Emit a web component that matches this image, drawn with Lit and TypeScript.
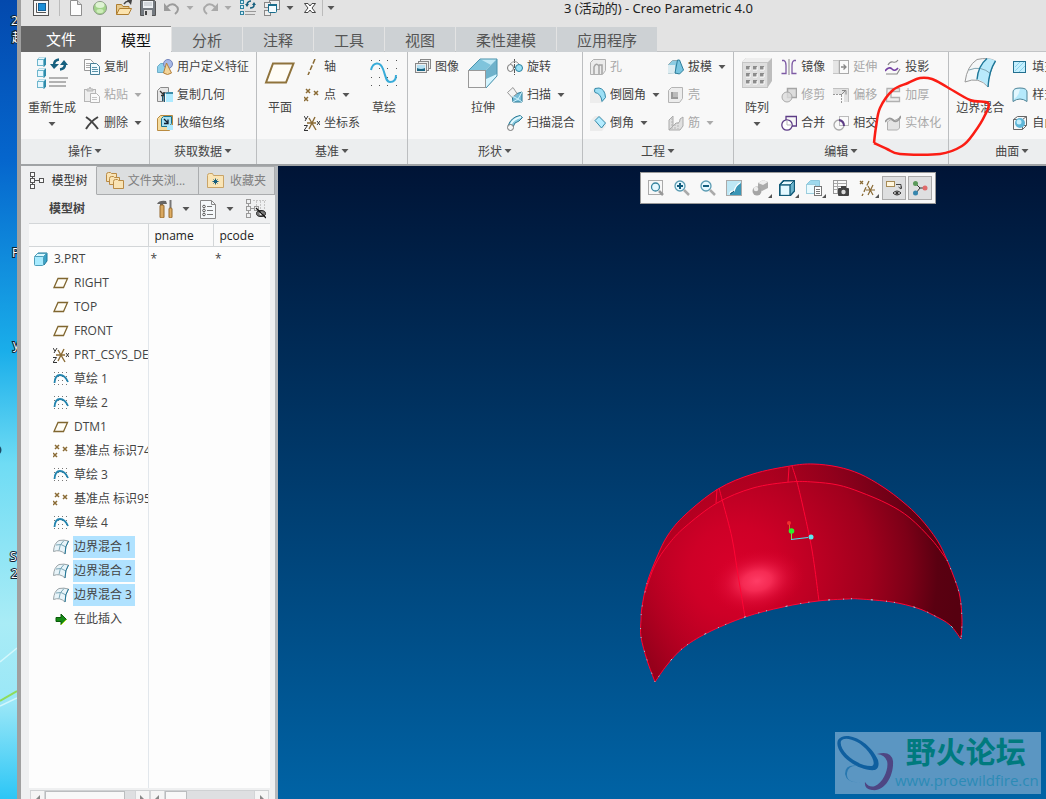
import { LitElement, html, svg, css } from "lit";
import { customElement } from "lit/decorators.js";

type Pt = [number, number];

/* Catmull-Rom spline through the points, written as cubic segments */
function spline(p: Pt[]): string {
  let d = `M${p[0][0]} ${p[0][1]}`;
  for (let i = 0; i < p.length - 1; i++) {
    const a = p[Math.max(i - 1, 0)], b = p[i], c = p[i + 1], e = p[Math.min(i + 2, p.length - 1)];
    const n = (v: number) => v.toFixed(1);
    d += `C${n(b[0] + (c[0] - a[0]) / 6)} ${n(b[1] + (c[1] - a[1]) / 6)} ${n(c[0] - (e[0] - b[0]) / 6)} ${n(c[1] - (e[1] - b[1]) / 6)} ${c[0]} ${c[1]}`;
  }
  return d;
}

const cubeSmall = (x: number, y: number) => svg`
  <path d="M${x} ${y + 3}l2-2.500h7v7l-2 2.500z" fill="#2f8cab"/><path d="M${x + 0.5} ${y + 2.5}l2-2h6l-2 2z" fill="#e4f7fd"/>
  <rect x=${x + 0.5} y=${y + 2.5} width="6" height="6" fill="#e6f8ff" stroke="#6fb6cd"/>`;
const cross = (x: number, y: number, c = "#8a6b35") => svg`<path d="M${x} ${y}l4 4m0-4l-4 4" stroke=${c} stroke-width="1.5" fill="none"/>`;
const dots = (xs: number[], ys: number[], c = "#555") => xs.map(x => ys.map(y => svg`<rect x=${x} y=${y} width="1" height="1" fill=${c}/>`));

const icons: Record<string, unknown> = {
  app: svg`<rect x=".5" y=".5" width="15" height="15" fill="#f7f7f7" stroke="#555"/><path d="M3.500 3v9.500h9.500" fill="none" stroke="#555"/><rect x="5.500" y="3.500" width="7" height="7" fill="#1b8fd8" stroke="#155f95"/>`,
  doc: svg`<path d="M2.500.5h7l4 4v11h-11z" fill="#fdfdfd" stroke="#8f8f8f"/><path d="M9.500.5v4h4" fill="#ddd" stroke="#8f8f8f"/>`,
  ball: svg`<circle cx="8" cy="8" r="6.500" fill="#a3d48b" stroke="#8b9a85"/><ellipse cx="8" cy="5" rx="4.500" ry="3" fill="#def3d3"/><ellipse cx="8" cy="11" rx="3.500" ry="2" fill="#cdedb9"/>`,
  open: svg`<path d="M.5 14.500v-10h5l1.500 2h6v2" fill="#e7c98c" stroke="#ae7d2f"/><path d="M.5 14.500l3-6h12l-3 6z" fill="#fbe3ae" stroke="#ae7d2f"/><path d="M8 4q3-4 6-2" fill="none" stroke="#444" stroke-width="1.500"/><path d="M11 0l5 0-1 5z" fill="#444"/>`,
  save: svg`<path d="M.5.5h14l1 1v14h-15z" fill="#747a80" stroke="#555"/><rect x="3" y="1" width="10" height="7" fill="#eef1f4"/><path d="M4 3h8M4 5h8" stroke="#b6bcc2"/><rect x="4" y="10" width="8" height="6" fill="#ddd"/><rect x="5" y="11" width="2" height="4" fill="#444"/>`,
  undo: svg`<path d="M3 7q4-4 8-2 6 4 0 9" fill="none" stroke="#9b9b9b" stroke-width="2"/><path d="M0 3v8h7z" fill="#9b9b9b"/>`,
  redo: svg`<path d="M13 7q-4-4-8-2-6 4 0 9" fill="none" stroke="#a9a9a9" stroke-width="2"/><path d="M16 3v8h-7z" fill="#a9a9a9"/>`,
  regenSmall: svg`<g fill="#cceefa" stroke="#31829f"><rect x=".5" y=".5" width="3" height="3"/><rect x=".5" y="5.500" width="3" height="3"/><rect x=".5" y="11.500" width="3" height="3"/></g><path d="M7 4q1-3 4-3M14 5q0 3-4 3" fill="none" stroke="#17607f" stroke-width="1.600"/><path d="M5 4h4l-2 3zM12 5h4l-2-3z" fill="#17607f"/><path d="M5 11.500h11M5 14.500h10" stroke="#999"/>`,
  windows: svg`<g fill="#eee" stroke="#888"><rect x="5.500" y=".5" width="10" height="9"/><rect x=".5" y="2.500" width="6" height="5"/><rect x=".5" y="10.500" width="6" height="5"/></g><rect x="4.500" y="4.500" width="8" height="8" rx="1" fill="#f3fbfe" stroke="#186c8c"/><path d="M4 5h9" stroke="#186c8c" stroke-width="2"/>`,
  close: svg`<path d="M2.500 3.500h3.500l2 2.500 2-2.500h3.500l-3.500 4.500 3.500 4.500h-3.500l-2-2.500-2 2.500H2.500L6 8z" fill="#fff" stroke="#444"/>`,
  regen: svg`${cubeSmall(1, 0)}${cubeSmall(1, 11)}${cubeSmall(1, 22)}<path d="M18 8q0-5 5-5.500M29 7q0 5-5 5.500" fill="none" stroke="#17607f" stroke-width="2.500"/><path d="M14 7h9l-5 5zM24 8h8l-4-5z" fill="#17607f"/><path d="M13 21h19M13 25h17M13 29h17" stroke="#9b9b9b" stroke-width="1.600"/>`,
  copy: svg`<path d="M.5.5h6l3 3v8h-9z" fill="#fdfdfd" stroke="#999"/><path d="M2 4.500h4M2 6.500h4M2 8.500h4" stroke="#aaa"/><path d="M6.500 4.500h6l3 3v8h-9z" fill="#f0fbff" stroke="#477f97"/><path d="M8 8.500h5M8 10.500h6M8 12.500h6" stroke="#5b93aa"/>`,
  paste: svg`<rect x=".5" y="2.500" width="11" height="12" fill="#eee" stroke="#b5b5b5"/><path d="M3 4V2h2l1-2 1 2h2v2z" fill="#d8d8d8" stroke="#b5b5b5"/><path d="M6.500 6.500h6l3 3v6h-9z" fill="#fafafa" stroke="#b5b5b5"/><path d="M8 10.500h5M8 12.500h5" stroke="#c5c5c5"/>`,
  del: svg`<path d="M2 2Q8 6 14 14M14 2Q7 6 2 14" fill="none" stroke="#444" stroke-width="2"/>`,
  udf: svg`<path d="M.5 7.500l3-3h7v7l-2 2h-8z" fill="#8fd0ea" stroke="#6eaec9"/><circle cx="11" cy="5" r="4.500" fill="#a7b8e6" stroke="#7384bb"/><path d="M9.500 4l5 10q-4 3-8 0z" fill="#f2d49a" stroke="#b4803c"/>`,
  copyGeom: svg`<path d="M.5 3.500l3-3h8v5h-5v9h-6z" fill="#e6e6e6" stroke="#8a8a8a"/><path d="M3 4l4 4M7 5v3.500H4" fill="none" stroke="#333" stroke-width="1.300"/><path d="M5.500 9v5M7.500 6v9" stroke="#175672"/><path d="M8 7l2-2h6v2" fill="#3c8daa"/><rect x="9" y="7" width="7" height="8" fill="#aeeaff"/>`,
  shrink: svg`<path d="M.5 3.500l3-3h12v10l-3 5H.5z" fill="#f5dc9f" stroke="#b98b40"/><path d="M4.500 3.500l2-2h8v7l-2 3h-8z" fill="#a6e1f3" stroke="#187391"/><path d="M7 4l4 4M11 4.500V8.500H7" fill="none" stroke="#123" stroke-width="1.300"/><rect x="10" y="10" width="6" height="5" fill="#aeeaff"/>`,
  plane: svg`<path d="M2 25.500L9 6.500h20.500l-7.500 19z" fill="#fffdf6" stroke="#8f733c" stroke-width="2"/>`,
  axis: svg`<path d="M11 0L4 16" stroke="#8a6b35" stroke-width="1.500" stroke-dasharray="5 2"/>`,
  point: svg`${cross(2, 2)}${cross(10, 4)}${cross(0, 10)}`,
  csys: svg`<path d="M3 8h9M5 14l6-12M5 3l7 12" fill="none" stroke="#8a6b35" stroke-width="1.400"/><path d="M0 1l2 3M4 1L1 6M0 10.500h3.500L0 15.500h4M13 6l3 4M16 6l-3 4" fill="none" stroke="#333"/>`,
  sketch: svg`${dots([3, 11, 19, 28], [3, 11, 20, 28])}<path d="M3 13C5 5 12 4 15 12S18 25 22 25 28 22 28 18" fill="none" stroke="#38abd8" stroke-width="2"/>`,
  image: svg`<g fill="#eee" stroke="#888"><rect x="5.500" y=".5" width="10" height="9"/><rect x="3.500" y="2.500" width="10" height="9"/><rect x=".5" y="4.500" width="11" height="9"/></g><rect x="2" y="6" width="8" height="6" fill="#b8e2f4"/><path d="M2 12v-3q4 2 8 0v3z" fill="#1d6784"/>`,
  extrude: svg`<path d="M2 13L13 2h17L19 13z" fill="#7fc4dc"/><path d="M13 2h17l-6 6z" fill="#bfe8f5"/><path d="M19 13L30 2v17L19 31z" fill="#6fb2cb"/><path d="M19 22l11-5v2L19 31z" fill="#d5f5ff"/><path d="M2 13L13 2h17v17L19 31" fill="none" stroke="#4b93ad"/><rect x="1.500" y="13.500" width="17" height="17" fill="#f8f8f8" stroke="#999"/>`,
  revolve: svg`<ellipse cx="3.500" cy="9" rx="3" ry="3.500" fill="#fafafa" stroke="#777"/><ellipse cx="12" cy="9" rx="3.500" ry="3.500" fill="#9be1f6" stroke="#297f9e"/><path d="M7.500 0v16" stroke="#555" stroke-dasharray="4 1"/><path d="M3 5q5-5 9 0" fill="none" stroke="#999"/>`,
  sweep: svg`<path d="M5 8l10-3v10H6z" fill="#78bdd8" stroke="#297894"/><path d="M.5 5.500L6 .5l4 6-5 4z" fill="#f4f4f4" stroke="#999"/><path d="M5 9l6 3 4-7M11 12l-5 3M11 12l4 3" fill="none" stroke="#cdf1fc"/>`,
  blend: svg`<path d="M1 11Q4 2 13 .5l2.500 2L12 6q-5 1-6 6z" fill="#86c8de" stroke="#297894"/><path d="M4 9q2-5 10-7" fill="none" stroke="#e5faff" stroke-width="2"/><circle cx="3.500" cy="12.500" r="3" fill="#f7f7f7" stroke="#777"/>`,
  hole: svg`<path d="M.5 3.500l3-3h12v11l-3 4h-12z" fill="#ebebeb" stroke="#b0b0b0"/><path d="M4 15V8q2-5 5-1v8M9 6h3v9" fill="none" stroke="#a4a4a4" stroke-width="1.500"/>`,
  round: svg`<path d="M0 6L4 1h6q6 3 6 9l-4 6H0z" fill="#ededed"/><path d="M5 1.500q-1 3 0 4 6 1 7 9l3.500-4Q15 2 9 1z" fill="#9cdff5" stroke="#3589a8"/>`,
  chamfer: svg`<path d="M0 6L5 1h5l6 6v4l-4 5H0z" fill="#ececec"/><path d="M5 5.500l4-4 6.500 6.500-4 5z" fill="#b4ecff" stroke="#3589a8"/>`,
  draft: svg`<path d="M.5 5.500l4-4h6v9l-3 4h-7z" fill="#8ecce2" stroke="#8fa8b0"/><path d="M0 14.500V6h7v9z" fill="#dcecf1"/><path d="M7 14l2.500-13h2l4 10-4 4z" fill="#79c5e0" stroke="#2c7c99"/>`,
  shell: svg`<path d="M.5 3.500l3-3h11v11l-3 4h-11z" fill="#ececec" stroke="#b4b4b4"/><rect x="3" y="5" width="7" height="7" fill="#999"/><rect x="5" y="5" width="5" height="5" fill="#bbb"/>`,
  rib: svg`<path d="M1 5l4-4v10l-4 4zM5 11l3-3q4 1 4-4l3-2v9l-3 4H1" fill="#e0e0e0" stroke="#aaa"/><path d="M4 3v11M7 9v5M10 7v7" stroke="#b5b5b5" stroke-dasharray="2 1"/>`,
  pattern: svg`<path d="M1 5l4-4h26v23l-4 6H1z" fill="#bdbdbd"/><path d="M1 5l4-4h26l-4 4z" fill="#ededed"/><rect x="1.500" y="5.500" width="25" height="25" fill="#dedede" stroke="#c5c5c5"/>${[5, 12, 19].map(x => [9, 16, 23].map(y => svg`<rect x=${x} y=${y} width="4" height="4" fill="#8c8c8c"/><path d="M${x} ${y + 4}h4v-3" fill="none" stroke="#fff"/>`))}`,
  mirror: svg`<path d="M8 0v16" stroke="#888"/><path d="M1 1.500h2q2 1 2 5v8H.5M15 1.500h-2q-2 1-2 5v8h4.500" fill="none" stroke="#7d5aa4" stroke-width="1.300"/>`,
  trim: svg`<rect x="6.500" y="1.500" width="9" height="9" fill="#ddd" stroke="#a5a5a5" stroke-width="1.500"/><circle cx="6" cy="10" r="5" fill="#dcdcdc" fill-opacity=".8" stroke="#aaa"/>`,
  merge: svg`<circle cx="6" cy="10" r="5.200" fill="#fff" stroke="#5d3c86" stroke-width="1.300"/><path d="M5 5V1.500h10.500V11H11" fill="none" stroke="#5d3c86" stroke-width="1.300"/><path d="M6 5v5h5" fill="none" stroke="#bbb"/>`,
  extend: svg`<path d="M0 1.500h6v13H0" fill="#e5e5e5" stroke="#c5c5c5"/><rect x="6.500" y="1.500" width="9" height="13" fill="#fafafa" stroke="#aaa"/><path d="M8 8h5M10.500 5.500l2.500 2.500-2.500 2.500" fill="none" stroke="#888" stroke-width="1.300"/>`,
  offset: svg`<path d="M0 1h15.500v14H11V7H0z" fill="#e2e2e2"/><path d="M0 1.500h15.500V15" fill="none" stroke="#c0c0c0"/><path d="M0 7.500h8.500V16" fill="#fafafa" stroke="#999" stroke-dasharray="2 1"/><path d="M8 8l5-5M9 3.500h4v4" fill="none" stroke="#888"/>`,
  intersect: svg`<rect x="6.500" y="1.500" width="9" height="9" fill="#fafafa" stroke="#bbb"/><circle cx="6" cy="10" r="5" fill="none" stroke="#aaa" stroke-width="1.300"/><path d="M6 5q5 1 5 6" fill="none" stroke="#5d3c86" stroke-width="2"/>`,
  project: svg`<path d="M3 6q2-4 5-3t5-2M1 15h11l3-5" fill="none" stroke="#888" stroke-width="1.200"/><path d="M0 12q4-5 7-2t6-1" fill="none" stroke="#7440a3" stroke-width="1.600"/>`,
  thicken: svg`<path d="M2 1.500h12.500v3H6v6h8.500v4H1.500z" fill="#eee" stroke="#b0b0b0" stroke-width="1.300"/>`,
  solidify: svg`<path d="M2.500 15V7q3-4 6-1l6-3v10l-2 2z" fill="#e4e4e4" stroke="#b0b0b0"/><path d="M0 7Q4 1 8 5t8-4" fill="none" stroke="#999" stroke-width="1.800"/>`,
  boundary: svg`<path d="M1 25Q3 9 13 2.500Q24 0 31.500 4Q25 14 24 30Q15 19 1 25z" fill="#f5f7f8" stroke="#999"/><path d="M23 1.500Q29 2 31.500 4Q25 14 24 30Q19 23 13 22.500Q14 9 23 1.500z" fill="#b9eafb"/><path d="M5 13Q17 8 27 17" fill="none" stroke="#7fa4b1"/><path d="M13 22.500Q14 9 23 1.500M31.500 4Q25 14 24 30" fill="none" stroke="#1c7698" stroke-width="1.400"/>`,
  fill: svg`<rect x="1.500" y="2.500" width="12" height="11" fill="#c4effe" stroke="#226f8f"/><path d="M3 12l9-9M3 8l5-5M7 13l6-6" stroke="#8bd2ea"/>`,
  style: svg`<path d="M1 5q0-4 7-4t7 4v9.500q-7-5-14 0z" fill="#b5e9fb" stroke="#4f8396"/><path d="M2 12q5-3 6-10-6 0-6 3z" fill="#e3f7fe"/>`,
  freestyle: svg`<path d="M1.500 4.500h9v10h-9zM5.500 1.500h9v9h-3M1.500 4.500l4-3M10.500 4.500l4-3M10.500 14.500l4-4" fill="none" stroke="#666"/><circle cx="8" cy="8" r="5" fill="#5fb6d8"/><circle cx="7" cy="7" r="2.500" fill="#c5effc"/>`,
  treeTab: svg`<g fill="#fafafa" stroke="#555"><rect x="1.500" y="0.500" width="4" height="4"/><rect x="1.500" y="6.500" width="4" height="4"/><rect x="1.500" y="12.500" width="4" height="4"/><rect x="10.500" y="6.500" width="4" height="4"/></g><path d="M3.500 5v1M3.500 11v1M6 8.500h4" stroke="#555"/>`,
  folders: svg`<g fill="#f9e3b4" stroke="#b98a45"><path d="M.5 2.500q0-2 2-2h2l1 1h5v8h-10z"/><path d="M3.500 6.500q0-2 2-2h2l1 1h5v7h-10z"/><path d="M7.500 9.500q0-2 2-2h2l1 1h5v8h-10z"/></g>`,
  fav: svg`<path d="M.5 3.500q0-2 2-2h3l1 2h10v12h-16z" fill="#fae5b6" stroke="#c9a468"/><path d="M8.500 6.500v6M5.500 9.500h6M6.500 7.500l4 4M10.500 7.500l-4 4" stroke="#165e7c"/>`,
  tools: svg`<path d="M1 4q2-4 9-3l1 3H7v2H4V4z" fill="#666"/><rect x="4" y="5" width="4" height="13" rx="1" fill="#d9a860" stroke="#94682c"/><path d="M14.500 0v8" stroke="#777" stroke-width="2"/><rect x="13" y="8" width="3" height="10" rx="1" fill="#e0ae63" stroke="#94682c"/>`,
  listDoc: svg`<path d="M1.500.5h11l4 4v14h-15z" fill="#f5f8fa" stroke="#888"/><path d="M12.500.5v4h4" fill="none" stroke="#888"/><g fill="#fff" stroke="#555"><circle cx="5" cy="6.500" r="1.300"/><circle cx="5" cy="10.500" r="1.300"/><circle cx="5" cy="14.500" r="1.300"/></g><path d="M8 6.500h5M8 10.500h6M8 14.500h6" stroke="#777"/>`,
  treeHide: svg`<g fill="none" stroke="#999"><rect x=".5" y=".5" width="4" height="4"/><rect x=".5" y="7.500" width="4" height="4"/><rect x=".5" y="14.500" width="4" height="4"/><rect x="8.500" y="7.500" width="4" height="4"/><path d="M2.500 5v2M2.500 12v2M5 9.500h3"/><path d="M7 1.500h13M10.500 2v5M14.500 2v8M18.500 2v8" stroke="#c5c5c5" stroke-dasharray="2 1"/></g><ellipse cx="15" cy="14.500" rx="4.500" ry="3" fill="#777" stroke="#222"/><circle cx="15" cy="14.500" r="1.500" fill="#fff"/><path d="M10 9l10 10" stroke="#111" stroke-width="1.300"/>`,
  part: svg`<path d="M2 5l3-3h9v8l-3 4z" fill="#3ba3c7" stroke="#1f789a"/><path d="M1.500 5.500l3-3h9l-3 3z" fill="#d8f8ff" stroke="#4e9fbb"/><rect x="1.500" y="5.500" width="9" height="9" rx="1" fill="#a8ebff" stroke="#4e9fbb"/>`,
  planeS: svg`<path d="M1 12.500l4-9h9.500l-4 9z" fill="#fffdf6" stroke="#80662f" stroke-width="1.300"/>`,
  sketchS: svg`${dots([1, 5, 9, 13], [1, 5, 9, 13], "#777")}<path d="M1.500 12Q2 4 7 4q5 0 8 7" fill="none" stroke="#2283ad" stroke-width="1.800"/>`,
  boundaryS: svg`<path d="M.5 12.500Q1 4 6 1.500q5-1 9.500.5Q12 7 12 15 7 10 .5 12.500z" fill="#e8f4f9" stroke="#9aa3a7"/><path d="M3 6q5-2 10 2M6 11.500q0-6 5-10" fill="none" stroke="#7ba7b7"/><path d="M15.500 2Q12 7 12 15" fill="none" stroke="#1c7698"/>`,
  insert: svg`<path d="M3 6.500h5V3l5.500 5.500L8 14v-3.500H3z" fill="#168a16" stroke="#0b5a0b"/><path d="M8 14l5.500-5.500" stroke="#aadd22"/>`,
  zoomFit: svg`<rect x=".5" y=".5" width="14" height="14" fill="none" stroke="#aaa"/><circle cx="7.500" cy="7" r="4" fill="#e6f8ff" stroke="#37849f" stroke-width="1.300"/><path d="M11 11l4 4" stroke="#999" stroke-width="2.500"/>`,
  zoomIn: svg`<circle cx="6" cy="6" r="5" fill="#e6f8ff" stroke="#5b9cb3" stroke-width="1.300"/><path d="M3 6h6M6 3v6" stroke="#125d7d" stroke-width="2"/><path d="M10 10l5 5" stroke="#aaa" stroke-width="2.500"/>`,
  zoomOut: svg`<circle cx="6" cy="6" r="5" fill="#e6f8ff" stroke="#5b9cb3" stroke-width="1.300"/><path d="M3 6h6" stroke="#125d7d" stroke-width="2"/><path d="M10 10l5 5" stroke="#aaa" stroke-width="2.500"/>`,
  repaint: svg`<rect x=".5" y=".5" width="15" height="15" fill="#3b96b6" stroke="#aaa"/><path d="M1 1h14v2Q10 5 8 11q-3-1-4 4H1z" fill="#bde7f5"/><path d="M4 14q0-3 4-3 2-6 6-8" fill="none" stroke="#fff" stroke-width="1.300"/><path d="M4 14q2-1 4-3" stroke="#1a5d78"/>`,
  shade: svg`<path d="M6 3l5-3 5 2v6l-6 3-4-2z" fill="#aaa"/><path d="M6 3l5-3 5 2-5 3z" fill="#eee"/><circle cx="5" cy="11" r="4.500" fill="#a5a5a5"/><circle cx="4" cy="9" r="2.300" fill="#ececec"/>`,
  cube: svg`<path d="M.5 5l4-4.500h11v10.500l-4 4.500H.5z" fill="#6db5cd" stroke="#125a78" stroke-width="1.300"/><path d="M1 5l4-4h10l-4 4z" fill="#eafaff" stroke="#125a78"/><rect x="1" y="5" width="10" height="10.500" fill="#e3f8ff" stroke="#125a78" stroke-width="1.300"/>`,
  views: svg`<path d="M.5 4.500l4-4h9v9l-3 4h-10z" fill="#9dd9ed" stroke="#8cc8dd"/><rect x=".5" y="4.500" width="9" height="9" fill="#e8faff" stroke="#9ccddd"/><rect x="8.500" y="6.500" width="7" height="9" fill="#fff" stroke="#777"/><path d="M10 9.500h4M10 11.500h4M10 13.500h4" stroke="#777"/>`,
  camera: svg`<rect x=".5" y=".5" width="13" height="13" fill="#fafafa" stroke="#999"/><path d="M1 3.500h12M1 6.500h12M1 9.500h12M4.500 1v12" stroke="#aaa"/><rect x="5" y="8" width="11" height="8" rx="1" fill="#444"/><rect x="8" y="6" width="5" height="3" fill="#444"/><circle cx="10.500" cy="12" r="2.200" fill="#ddd"/>`,
  datums: svg`<path d="M1 1l3 3m0-3L1 4M10 1L3 16" stroke="#8a6b35" stroke-width="1.300" stroke-dasharray="5 2" fill="none"/><path d="M7 10h9M9 15l5-10M9 6l5 9" stroke="#8a6b35" stroke-width="1.200"/>`,
  annot: svg`<rect x=".5" y="1.500" width="8" height="5" fill="#fff6dd" stroke="#a68a55"/><path d="M10 4.500h5v4M12.500 7l2.500 2 1-3" fill="none" stroke="#444"/><path d="M7 13q4-4 8 0-4 4-8 0z" fill="#eee" stroke="#333"/><circle cx="11" cy="13" r="1.600" fill="#333"/>`,
  spin: svg`<path d="M4 4l4 4-4 5M8 8h5" fill="none" stroke="#333"/><circle cx="3.500" cy="3.500" r="2.500" fill="#5b9a5b"/><circle cx="3.500" cy="13" r="2.500" fill="#3686ad"/><circle cx="13" cy="8" r="2.500" fill="#e06a6a"/>`,
};

const ic = (name: string, box = 16, w = box, h = w) =>
  html`<svg class="ic" width=${w} height=${h} viewBox="0 0 ${box} ${(box * h) / w}" aria-hidden="true">${icons[name]}</svg>`;
const caret = html`<svg class="caret" width="8" height="5" viewBox="0 0 8 5" aria-hidden="true"><path d="M.5 0h7L4 4z" fill="currentColor"/></svg>`;

interface Cmd { t: string; i: string; off?: boolean; drop?: boolean }
type Col = { big: Cmd } | { list: Cmd[] };
const c = (t: string, i: string, flags = ""): Cmd => ({ t, i, off: flags.includes("x"), drop: flags.includes("v") });

const groups: { name: string; cols: Col[] }[] = [
  { name: "操作", cols: [{ big: c("重新生成", "regen", "v") }, { list: [c("复制", "copy"), c("粘贴", "paste", "xv"), c("删除", "del", "v")] }] },
  { name: "获取数据", cols: [{ list: [c("用户定义特征", "udf"), c("复制几何", "copyGeom"), c("收缩包络", "shrink")] }] },
  { name: "基准", cols: [{ big: c("平面", "plane") }, { list: [c("轴", "axis"), c("点", "point", "v"), c("坐标系", "csys")] }, { big: c("草绘", "sketch") }] },
  { name: "形状", cols: [{ list: [c("图像", "image")] }, { big: c("拉伸", "extrude") }, { list: [c("旋转", "revolve"), c("扫描", "sweep", "v"), c("扫描混合", "blend")] }] },
  { name: "工程", cols: [{ list: [c("孔", "hole", "x"), c("倒圆角", "round", "v"), c("倒角", "chamfer", "v")] }, { list: [c("拔模", "draft", "v"), c("壳", "shell", "x"), c("筋", "rib", "xv")] }] },
  { name: "编辑", cols: [{ big: c("阵列", "pattern", "v") }, { list: [c("镜像", "mirror"), c("修剪", "trim", "x"), c("合并", "merge")] }, { list: [c("延伸", "extend", "x"), c("偏移", "offset", "x"), c("相交", "intersect")] }, { list: [c("投影", "project"), c("加厚", "thicken", "x"), c("实体化", "solidify", "x")] }] },
  { name: "曲面", cols: [{ big: c("边界混合", "boundary") }, { list: [c("填充", "fill"), c("样式", "style"), c("自由式", "freestyle")] }] },
];

const tree: { t: string; i: string; sel?: boolean }[] = [
  { t: "RIGHT", i: "planeS" }, { t: "TOP", i: "planeS" }, { t: "FRONT", i: "planeS" },
  { t: "PRT_CSYS_DEF", i: "csys" }, { t: "草绘 1", i: "sketchS" }, { t: "草绘 2", i: "sketchS" },
  { t: "DTM1", i: "planeS" }, { t: "基准点 标识74", i: "point" }, { t: "草绘 3", i: "sketchS" },
  { t: "基准点 标识95", i: "point" }, { t: "草绘 4", i: "sketchS" },
  { t: "边界混合 1", i: "boundaryS", sel: true }, { t: "边界混合 2", i: "boundaryS", sel: true }, { t: "边界混合 3", i: "boundaryS", sel: true },
  { t: "在此插入", i: "insert" },
];

const viewTools: { i: string; t: string; drop?: boolean; on?: boolean }[] = [
  { i: "zoomFit", t: "重新调整" }, { i: "zoomIn", t: "放大" }, { i: "zoomOut", t: "缩小" }, { i: "repaint", t: "重画" },
  { i: "shade", t: "渲染选项", drop: true }, { i: "cube", t: "显示样式", drop: true }, { i: "views", t: "已保存方向", drop: true },
  { i: "camera", t: "视图管理器" }, { i: "datums", t: "基准显示过滤器", drop: true }, { i: "annot", t: "注释显示", on: true }, { i: "spin", t: "旋转中心", on: true },
];

const upper: Pt[] = [[655, 682], [647, 660], [641, 637], [641, 620], [642, 607], [647, 583], [657, 557], [668, 535], [685, 515], [718, 489], [753, 474], [790, 466], [813, 464], [838, 467], [860, 474], [883, 487], [903, 502], [920, 518], [937, 540], [947, 560], [955, 580], [960, 597], [962, 620], [961, 639]];
const lower: Pt[] = [[961, 639], [950, 625], [935, 616], [917, 608], [892, 602], [860, 599], [847, 599], [818, 601], [783, 607], [745, 617], [707, 633], [683, 648], [667, 665], [655, 682]];
const inner: Pt[] = [[645, 592], [655, 565], [668, 545], [685, 527], [717, 503], [753, 488], [790, 482], [813, 482], [838, 485], [860, 492], [888, 504], [910, 518], [932, 540], [947, 560]];
const seamA: Pt[] = [[719, 488], [723, 503], [732, 538], [738, 575], [745, 617]];
const seamB: Pt[] = [[792, 466], [797, 482], [803, 507], [812, 550], [819, 601]];
const outline = spline(upper) + spline(lower).replace(/^M[^C]*/, "") + "Z";
const rim = spline(upper.slice(5, 20)) + spline([...inner].reverse()).replace(/^M/, "L") + "Z";
const mark: Pt[] = [[874, 143], [876, 127], [880, 108], [893, 90], [908, 83], [920, 78], [932, 79], [947, 87], [970, 100], [988, 103], [985, 115], [974, 133], [962, 146], [940, 154], [900, 154], [887, 149], [874, 143]];

@customElement("app-root")
export class AppRoot extends LitElement {
  static styles = css`
    :host { display: block; font: 12px/16px "Open Sans", "Noto Sans CJK SC", sans-serif; color: #444; }
    * { box-sizing: border-box; }
    button { font: inherit; color: inherit; background: none; border: 0; padding: 0; margin: 0; display: flex; align-items: center; white-space: nowrap; }
    svg { display: block; flex: none; }
    .screen { display: flex; height: 100vh; overflow: hidden; }
    .desktop { flex: none; width: 17px; overflow: hidden; background: linear-gradient(#0349ad, #0566cd 20%, #1aaeea 44%, #6fdcf4 58%, #a9ecf6 78%, #9ae7f7 88%, #2cc6f6); }
    .desktop text { font-size: 12px; fill: #fff; paint-order: stroke; stroke: #123; stroke-width: 2px; }
    .window { flex: 1; min-width: 0; display: flex; flex-direction: column; border-left: 4px solid #a0a0a0; background: #e3e3e3; position: relative; }
    .title { flex: none; display: flex; align-items: flex-start; height: 26px; padding-left: 12px; }
    .quick { display: flex; align-items: center; gap: 8px; height: 16px; color: #555; }
    .quick .sep { width: 1px; height: 20px; background: #bbb; align-self: flex-end; }
    .quick .caret { margin-left: -2px; }
    .off { color: #a8a8a8; }
    .quick .lead { margin-right: 2px; }
    .quick .end { margin: 0 -2px 0 -4px; }
    .caption { margin: 0 0 0 229px; font-family: "Noto Sans", "Noto Sans CJK SC", sans-serif; font-size: 13px; line-height: 16px; font-weight: 400; color: #222; white-space: nowrap; }
    .tabs { flex: none; display: flex; gap: 1px; height: 26px; border-bottom: 1px solid #c2c4c6; font-size: 15px; line-height: 24px; color: #555; }
    .tabs button { padding: 0 20px; height: 25px; margin-top: 1px; background: #cdd1d4; }
    .tabs .file { padding: 0 25px; margin-right: -1px; background: #666; color: #fff; margin-top: 0; height: 26px; }
    .tabs .cur { background: #f8f8f8; color: #111; margin-top: 0; height: 26px; border-top: 1px solid #888; }
    .ribbon { flex: none; display: flex; overflow: hidden; border-bottom: 2px solid #a0a3a5; background: #f8f8f8; }
    .group { flex: none; border-right: 1px solid #bcbec0; }
    .body { display: flex; gap: 8px; height: 87px; padding: 1px 7px 0; }
    .list { display: grid; grid-auto-rows: 28px; align-content: start; justify-items: start; }
    .list button { gap: 4px; }
    .list .caret { margin-left: 2px; }
    .caret { color: #555; }
    .off .caret { color: #aaa; }
    .big { flex-direction: column; align-items: center; align-self: flex-start; min-width: 32px; padding-top: 4px; }
    .big span { margin-top: 11px; }
    .big .caret { margin-top: 6px; }
    .gname { width: 100%; height: 25px; justify-content: center; gap: 2px; background: #eceeef; }
    .main { flex: 1; min-height: 0; display: flex; }
    .panel { flex: none; width: 257px; display: flex; flex-direction: column; background: #eff0f1; border-right: 3px solid #b4b8bc; }
    .ptabs { flex: none; display: flex; height: 29px; }
    .ptabs button { gap: 6px; justify-content: center; color: #808080; background: #dcdedf; border: 1px solid #aaacae; border-left: 0; }
    .ptabs .cur { width: 76px; background: #eff0f1; border-color: transparent #aaacae transparent transparent; color: #333; }
    .ptabs .browse { width: 102px; gap: 4px; padding-right: 4px; }
    .ptabs .fav { flex: 1; }
    .phead { flex: none; display: flex; align-items: center; height: 28px; padding: 0 9px 0 28px; }
    .phead h2 { margin: 0 auto 0 0; font-size: 12px; font-weight: 600; }
    .phead button { gap: 8px; margin-left: 9px; }
    .phead .last { margin-left: 12px; }
    .tree { flex: 1; min-height: 0; margin: 0 5px 2px 8px; background: #fdfdfd; overflow: hidden; }
    table { width: 100%; height: 100%; border-collapse: collapse; table-layout: fixed; }
    th { height: 23px; padding: 2px 6px 0; font-weight: 400; text-align: left; color: #222; background: #fafafa; border: 1px solid #d3d6d8; }
    th:first-child { border-left: 0; }
    th:last-child { border-right: 0; }
    .c1 { width: 119px; }
    .c2 { width: 65px; }
    td { height: 24px; padding: 0; overflow: hidden; white-space: nowrap; line-height: 22px; }
    td:first-child { border-right: 1px solid #e2e7ec; }
    .star { padding: 0 2px; }
    .node { display: flex; align-items: center; gap: 4px; padding-left: 24px; }
    .root { padding-left: 4px; }
    .node span { padding: 0 1px; }
    .sel span { background: #b0e2ff; padding-right: 3px; }
    .rest { height: auto; }
    .bars { flex: none; display: flex; height: 9px; margin: 0 6px 0 9px; overflow: hidden; }
    .bar { flex: 1; display: flex; align-items: flex-start; height: 16px; background: #dedfe1; border-top: 1px solid #cfd1d3; }
    .bar button { width: 15px; height: 16px; justify-content: center; background: #f5f5f5; border: 1px solid #d3d5d7; border-top: 0; }
    .thumb { width: 80px; height: 16px; background: #f8f8f8; border: 1px solid #bbbdbf; margin-right: auto; }
    .thumb.short { width: 22px; }
    .view { flex: 1; min-width: 0; position: relative; overflow: hidden; background: linear-gradient(#001436, #0063a5); }
    .model { position: absolute; left: 0; top: 0; }
    .vtools { position: absolute; left: 362px; top: 6px; display: flex; gap: 2px; padding: 3px; background: #f8f8f8; border: 1px solid #999; }
    .vtools button { position: relative; width: 24px; height: 24px; padding: 0 0 0 4px; }
    .vtools .drop { width: 25px; }
    .vtools .drop::after { content: ""; position: absolute; right: 1px; bottom: 2px; border: 2px solid; border-color: transparent #555 #555 transparent; }
    .vtools .on { background: #dedfe0; border: 1px solid #aaa; padding-left: 3px; }
    .water { position: absolute; right: 5px; bottom: 5px; display: flex; width: 206px; height: 62px; background: #5b96c2; }
    .wtext { display: flex; flex-direction: column; align-items: flex-end; flex: 1; padding-right: 5px; }
    .wtext b { font-size: 30px; line-height: 40px; font-weight: 700; color: #007a7e; padding-right: 13px; }
    .wtext span { font-size: 15px; line-height: 16px; color: #2c8bb6; }
    .mark { position: absolute; left: 849px; top: 74px; pointer-events: none; }
  `;

  private cmd(k: Cmd) {
    return html`<button class=${k.off ? "off" : ""}>${ic(k.i)}<span>${k.t}</span>${k.drop ? caret : ""}</button>`;
  }

  private column(col: Col) {
    if ("big" in col) {
      const k = col.big;
      return html`<button class="big">${ic(k.i, 32)}<span>${k.t}</span>${k.drop ? caret : ""}</button>`;
    }
    return html`<div class="list">${col.list.map(k => this.cmd(k))}</div>`;
  }

  private bar(cls: string) {
    return html`<div class="bar">
      <button aria-label="向左滚动"><svg width="4" height="8"><path d="M4 0v8L0 4z" fill="#888"/></svg></button>
      <div class="thumb ${cls}"></div>
      <button aria-label="向右滚动"><svg width="4" height="8"><path d="M0 0v8l4-4z" fill="#888"/></svg></button>
    </div>`;
  }

  private scene() {
    return html`<svg class="model" width="768" height="633" viewBox="278 166 768 633" aria-hidden="true">
      <defs>
        <radialGradient id="body" gradientUnits="userSpaceOnUse" cx="735" cy="570" r="225">
          <stop offset="0" stop-color="#d8002a"/><stop offset=".2" stop-color="#ce0027"/><stop offset=".4" stop-color="#b80022"/>
          <stop offset=".6" stop-color="#a0001d"/><stop offset=".78" stop-color="#7c0017"/><stop offset=".9" stop-color="#5a0011"/><stop offset="1" stop-color="#560010"/>
        </radialGradient>
        <linearGradient id="edge" gradientUnits="userSpaceOnUse" x1="640" y1="640" x2="700" y2="610">
          <stop offset="0" stop-color="#90001a" stop-opacity=".7"/><stop offset="1" stop-color="#c80026" stop-opacity="0"/>
        </linearGradient>
        <radialGradient id="shine" gradientUnits="userSpaceOnUse" cx="0" cy="0" r="1" gradientTransform="translate(757 581) rotate(-12) scale(48 32)">
          <stop offset="0" stop-color="#ff3d66"/><stop offset=".3" stop-color="#fb325b" stop-opacity=".85"/><stop offset=".65" stop-color="#e61540" stop-opacity=".4"/><stop offset="1" stop-color="#d60029" stop-opacity="0"/>
        </radialGradient>
        <linearGradient id="rim" gradientUnits="userSpaceOnUse" x1="650" y1="0" x2="950" y2="0">
          <stop offset="0" stop-color="#900018" stop-opacity=".3"/><stop offset=".4" stop-color="#a0001c" stop-opacity=".35"/><stop offset=".65" stop-color="#80001a" stop-opacity=".6"/><stop offset="1" stop-color="#500010"/>
        </linearGradient>
        <clipPath id="shell"><path d=${outline}/></clipPath>
      </defs>
      <path d=${outline} fill="url(#body)"/>
      <path d=${outline} fill="url(#edge)"/>
      <path d=${rim} fill="url(#rim)"/>
      <circle cx="757" cy="581" r="50" fill="url(#shine)" clip-path="url(#shell)"/>
      <g fill="none" stroke="#ff0535">
        <path d=${outline}/><path d=${spline(inner)}/><path d=${spline(seamA)}/><path d=${spline(seamB)}/>
        <path d="M717 489l-1 14M789 467l-1 15"/>
      </g>
      <path d=${spline(lower)} fill="none" stroke="#7fe9ee" stroke-dasharray="1 13 2 19 1 7"/>
      <path d=${spline(upper.slice(0, 6))} fill="none" stroke="#7fe9ee" stroke-dasharray="1 8 1 13"/>
      <path d=${spline(upper.slice(19))} fill="none" stroke="#7fe9ee" stroke-dasharray="1 8 1 13"/>
      <path d="M789.500 524v8" stroke="#d66a2a"/><path d="M791.500 531v8.500" stroke="#7fe04a"/><path d="M791 539.500l17-2" stroke="#4ae6f2"/>
      <circle cx="789" cy="523" r="2" fill="#f03030"/><circle cx="791.500" cy="531" r="2.800" fill="#2df02d"/><circle cx="811" cy="537" r="2.500" fill="#5beaf2"/>
    </svg>`;
  }

  render() {
    return html`<div class="screen">
      <div class="desktop">
        <svg width="17" height="799">
          <text x="11" y="25">2</text><text x="12" y="42">起</text><text x="12" y="257">P</text><text x="13" y="349">y</text><text x="10" y="561">S</text><text x="11" y="578">2</text>
          <circle cx="-4" cy="450" r="5.500" fill="#1c4a66"/>
          <path d="M0 662L17 648M0 706L17 698" stroke="#d3f7fc" stroke-width="1.500"/><path d="M0 701L17 691" stroke="#8fdc5a" stroke-width="2"/>
        </svg>
      </div>
      <div class="window">
        <header class="title">
          <div class="quick">
            <button class="lead" aria-label="窗口">${ic("app")}</button><i class="sep"></i>
            <button aria-label="新建">${ic("doc")}</button>
            <button aria-label="联机">${ic("ball")}</button>
            <button aria-label="打开">${ic("open")}</button>
            <button aria-label="保存">${ic("save")}</button>
            <button aria-label="撤消">${ic("undo")}</button><button class="off" aria-label="撤消列表">${caret}</button>
            <button aria-label="重做">${ic("redo")}</button><button class="off" aria-label="重做列表">${caret}</button>
            <button aria-label="重新生成">${ic("regenSmall")}</button>
            <button aria-label="窗口列表">${ic("windows")}</button><button aria-label="窗口菜单">${caret}</button>
            <button aria-label="关闭">${ic("close")}</button><i class="sep end"></i>
            <button aria-label="自定义">${caret}</button>
          </div>
          <h1 class="caption">3 (活动的) - Creo Parametric 4.0</h1>
        </header>
        <nav class="tabs">
          <button class="file">文件</button><button class="cur">模型</button>
          ${["分析", "注释", "工具", "视图", "柔性建模", "应用程序"].map(t => html`<button>${t}</button>`)}
        </nav>
        <section class="ribbon">
          ${groups.map(g => html`<div class="group"><div class="body">${g.cols.map(k => this.column(k))}</div><button class="gname">${g.name}${caret}</button></div>`)}
        </section>
        <div class="main">
          <aside class="panel">
            <div class="ptabs">
              <button class="cur">${ic("treeTab", 16, 16, 18)}模型树</button>
              <button class="browse">${ic("folders", 18)}文件夹浏...</button>
              <button class="fav">${ic("fav", 17)}收藏夹</button>
            </div>
            <div class="phead">
              <h2>模型树</h2>
              <button aria-label="设置">${ic("tools", 18)}${caret}</button>
              <button aria-label="显示">${ic("listDoc", 19)}${caret}</button>
              <button class="last" aria-label="隐藏">${ic("treeHide", 20)}</button>
            </div>
            <div class="tree">
              <table>
                <colgroup><col class="c1"><col class="c2"><col></colgroup>
                <thead><tr><th></th><th>pname</th><th>pcode</th></tr></thead>
                <tbody>
                  <tr><td><div class="node root">${ic("part")}<span>3.PRT</span></div></td><td class="star">*</td><td class="star">*</td></tr>
                  ${tree.map(n => html`<tr><td><div class="node ${n.sel ? "sel" : ""}">${ic(n.i)}<span>${n.t}</span></div></td><td></td><td></td></tr>`)}
                  <tr><td class="rest"></td><td class="rest"></td><td class="rest"></td></tr>
                </tbody>
              </table>
            </div>
            <div class="bars">${this.bar("")}${this.bar("short")}</div>
          </aside>
          <main class="view">
            ${this.scene()}
            <div class="vtools">${viewTools.map(v => html`<button class="${v.drop ? "drop" : ""} ${v.on ? "on" : ""}" aria-label=${v.t}>${ic(v.i)}</button>`)}</div>
            <div class="water">
              <svg width="60" height="62" viewBox="0 0 60 62" aria-hidden="true">
                <path fill-rule="evenodd" d="M3 8C10-2 34 8 43 28q2 8-3 10C22 40-2 20 3 8zm3 1c-3 10 17 26 31 25 6-3-5-19-15-24-6-3-13-5-16-1z" fill="#0f5f9f"/>
                <path d="M42 22q14-4 16 7c1 14-8 31-21 29q-8-1-7-8 4 6 10 4c9-4 14-18 12-25q-2-6-10-7z" fill="#4e4683"/>
                <path d="M28 35q-14-4-16 6c-1 8 6 10 14 9q-14 2-16-8 0-12 18-7z" fill="#2878b0"/>
              </svg>
              <div class="wtext"><b>野火论坛</b><span>www.proewildfire.cn</span></div>
            </div>
          </main>
        </div>
        <svg class="mark" width="124" height="88" viewBox="870 74 124 88" aria-hidden="true"><path d=${spline(mark)} fill="none" stroke="#fb1d14" stroke-width="2.500" stroke-linejoin="round"/></svg>
      </div>
    </div>`;
  }
}
